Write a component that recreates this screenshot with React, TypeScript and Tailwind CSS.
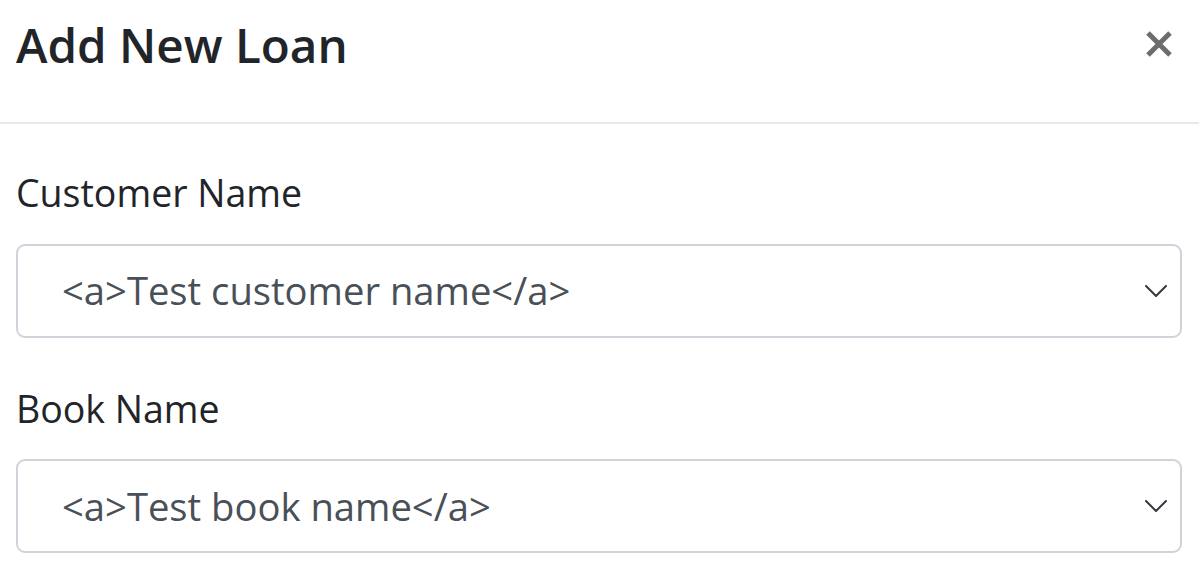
import React from "react";

function Chevron() {
  return (
    <svg width="22" height="12" viewBox="0 0 22 12" fill="none" className="shrink-0">
      <path d="M1 1 L11 11 L21 1" stroke="#343a40" strokeWidth="2" strokeLinecap="round" strokeLinejoin="round" />
    </svg>
  );
}

function SelectBox({ value }: { value: string }) {
  return (
    <div className="flex h-[94px] w-[1166px] items-center justify-between rounded-[9px] border-2 border-[#ced4da] bg-white pl-[44px] pr-[13px]">
      <span className="text-[38.2px] leading-none text-[#495057]">{value}</span>
      <Chevron />
    </div>
  );
}

export default function App() {
  return (
    <div
      className="h-[582px] w-[1199px] overflow-hidden bg-white text-[#212529]"
      style={{ fontFamily: '"Open Sans", "Noto Sans", sans-serif' }}
    >
      <div className="flex h-[124px] items-start justify-between border-b-2 border-[#e6e8eb] pl-[16px] pr-[26px]">
        <h5 className="mt-[21px] text-[47.6px] font-semibold leading-none">Add New Loan</h5>
        <svg width="28" height="28" viewBox="0 0 28 28" className="mt-[30px]">
          <path d="M3 3 L25 25 M25 3 L3 25" stroke="#6c6c6c" strokeWidth="5" strokeLinecap="butt" />
        </svg>
      </div>
      <div className="flex flex-col pl-[16px] pt-[50px]">
        <label className="mb-[32px] text-[37.5px] leading-none">Customer Name</label>
        <SelectBox value="<a>Test customer name</a>" />
        <label className="mb-[32px] mt-[52px] text-[37.5px] leading-none">Book Name</label>
        <SelectBox value="<a>Test book name</a>" />
      </div>
    </div>
  );
}
